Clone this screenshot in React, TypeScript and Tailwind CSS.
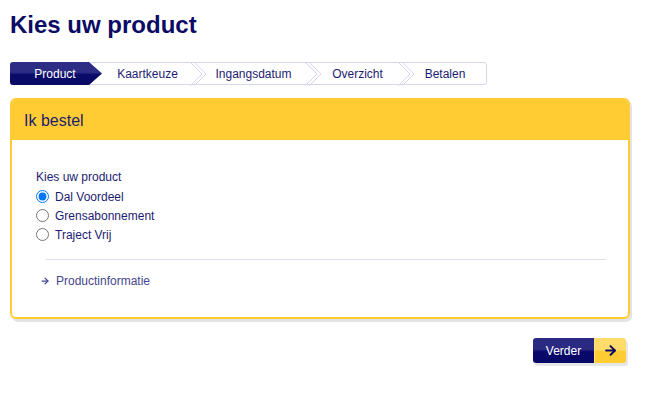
import { ArrowRight } from "lucide-react"

const steps = [
  { label: "Product", w: "w-[90px]" },
  { label: "Kaartkeuze", w: "w-[97px]" },
  { label: "Ingangsdatum", w: "w-[115px]" },
  { label: "Overzicht", w: "w-[93px]" },
  { label: "Betalen", w: "w-[82px]" },
]

const products = ["Dal Voordeel", "Grensabonnement", "Traject Vrij"]

function Chevron() {
  return (
    <svg className="absolute right-[-10px] top-[-1px] z-10" width="18" height="24" viewBox="0 0 18 24">
      <polyline points="0,0 12,12 0,24" fill="none" stroke="#d6d6ec" strokeWidth="1" />
      <polyline points="4,0 16,12 4,24" fill="none" stroke="#d6d6ec" strokeWidth="1" />
    </svg>
  )
}

function StepBar() {
  return (
    <div className="flex h-[23px] w-[477px] rounded-[3px] border border-[#d6d6ec] bg-white">
      {steps.map((s, i) => {
        const active = i === 0
        return (
          <div key={s.label} className={`relative flex h-full shrink-0 items-center justify-center ${s.w}`}>
            {active ? (
              <div className="absolute inset-y-[-1px] left-[-1px] right-[-1px] rounded-l-[3px] bg-[linear-gradient(#2d2d86_0%,#2d2d86_45%,#0a0a69_55%,#0a0a69_100%)] [clip-path:polygon(0_0,calc(100%-13px)_0,100%_50%,calc(100%-13px)_100%,0_100%)]" />
            ) : null}
            {!active && i < steps.length - 1 ? <Chevron /> : null}
            <span className={`relative z-20 text-[12px] ${active ? "pr-[2px] text-white" : "pr-[4px] text-[#1c1c72]"}`}>
              {s.label}
            </span>
          </div>
        )
      })}
    </div>
  )
}

export default function App() {
  return (
    <div className="min-h-[403px] w-[645px] bg-white px-[10px] pt-[10px] font-['Liberation_Sans',Arial,sans-serif]">
      <h1 className="text-[24px] font-bold leading-[30px] text-[#0b0b66]">Kies uw product</h1>

      <div className="mt-[22px]">
        <StepBar />
      </div>

      <div className="mt-[13px] w-[620px] overflow-hidden rounded-[6px] border-2 border-[#ffcc33] bg-white shadow-[2px_3px_0_#e4e4e4]">
        <div className="flex h-[40px] items-center bg-[#ffcc33] px-[12px] pt-[2px]">
          <span className="text-[16px] text-[#1c1c6e]">Ik bestel</span>
        </div>

        <div className="px-[24px] pb-[27px] pt-[30px] text-[12px] text-[#1c1c72]">
          <div className="leading-[14px]">Kies uw product</div>
          <div className="mt-[3px] flex flex-col">
            {products.map((p, i) => (
              <label key={p} className="flex h-[19px] items-center">
                <input
                  type="radio"
                  name="product"
                  defaultChecked={i === 0}
                  className="m-0 h-[13px] w-[13px] accent-[#0075ff]"
                />
                <span className="ml-[6px]">{p}</span>
              </label>
            ))}
          </div>

          <div className="-mr-[2px] ml-[10px] mt-[15px] h-px bg-[#dedeea]" />

          <div className="mt-[12px] flex items-center pl-[4px] text-[#46468e]">
            <ArrowRight size={10} strokeWidth={3} className="text-[#46468e]" />
            <span className="ml-[6px]">Productinformatie</span>
          </div>
        </div>
      </div>

      <div className="mt-[19px] flex w-[616px] justify-end">
        <button
          type="button"
          className="flex h-[25px] overflow-hidden rounded-[3px] shadow-[2px_3px_0_#e6e6e6]"
        >
          <span className="flex w-[61px] items-center justify-center bg-[linear-gradient(#2a2a82_0%,#2a2a82_45%,#08086a_55%,#08086a_100%)] text-[12px] text-white">
            Verder
          </span>
          <span className="flex w-[32px] items-center justify-center border-l border-[#ffe27a] bg-[linear-gradient(#ffdc6a_0%,#ffdc6a_45%,#ffcc33_55%,#ffcc33_100%)]">
            <ArrowRight size={15} strokeWidth={3.2} className="text-[#0b0b66]" />
          </span>
        </button>
      </div>
    </div>
  )
}
